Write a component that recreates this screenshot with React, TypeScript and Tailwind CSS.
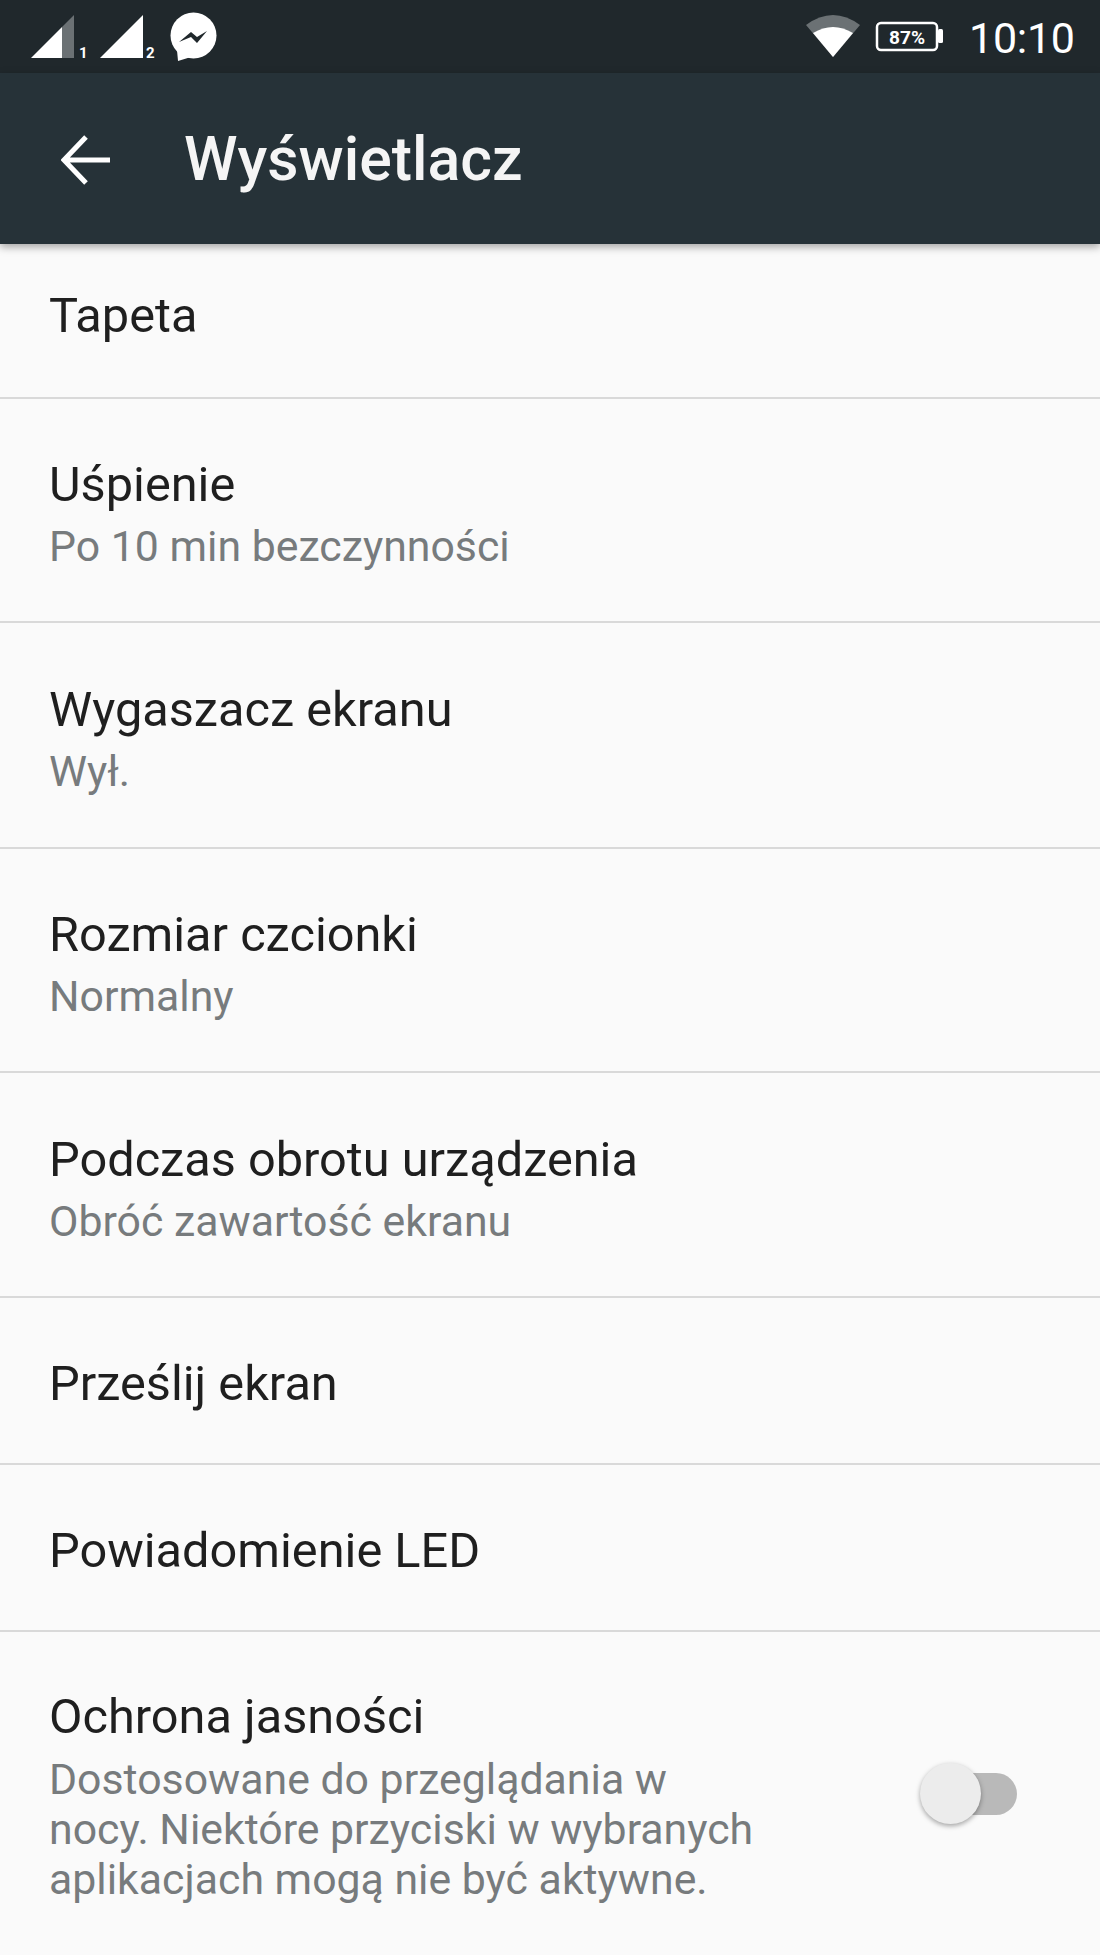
const font = { fontFamily: 'Roboto, sans-serif' };

function Title({ children }: { children: string }) {
  return <div className="text-[48.7px] leading-[56px] text-[#1f1f1f]">{children}</div>;
}

function Sub({ children }: { children: string }) {
  return <div className="text-[42.8px] leading-[50px] text-[#777b7d]">{children}</div>;
}

function Row({ title, sub, h, pad }: { title: string; sub?: string; h: string; pad: string }) {
  return (
    <div className={`${h} ${pad} flex flex-col justify-center border-b-2 border-[#d9d9d9] pl-[49px]`}>
      <Title>{title}</Title>
      {sub && <div className="mt-[8px]"><Sub>{sub}</Sub></div>}
    </div>
  );
}

export default function App() {
  return (
    <div className="w-[1100px] h-[1955px] overflow-hidden bg-[#fafafa] relative" style={font}>
      <div className="h-[73px] bg-[#20282c] flex items-start justify-between text-white">
        <svg width="240" height="73" viewBox="0 0 240 73">
          <polygon points="31,58 62,58 62,27" fill="#fff" />
          <polygon points="62,58 74,58 74,15 62,27" fill="#6b7174" />
          <text x="79" y="58" fontSize="15" fontWeight="700" fill="#fff">1</text>
          <polygon points="100,58 143,58 143,15" fill="#fff" />
          <text x="146" y="58" fontSize="15" fontWeight="700" fill="#fff">2</text>
          <circle cx="193.5" cy="35.5" r="23" fill="#fff" />
          <polygon points="177,50 178,61 191,57" fill="#fff" />
          <path d="M179 42 L191 32 L197 37 L207 31 L197 43 L191 37 Z" fill="#20282c" />
        </svg>
        <div className="flex items-start">
          <svg width="300" height="73" viewBox="800 0 300 73">
            <path d="M806 25 Q833 5 860 25 L833 57 Z" fill="#6b7174" />
            <path d="M813 33 Q833 21 853 33 L833 57 Z" fill="#fff" />
            <rect x="877" y="23" width="60" height="27" rx="4" fill="none" stroke="#fff" strokeWidth="2.5" />
            <rect x="938" y="29" width="5" height="14" rx="1.5" fill="#fff" />
            <text x="889" y="44" fontSize="19" fontWeight="700" fill="#fff" textLength="36" lengthAdjust="spacingAndGlyphs">87%</text>
            <text x="969" y="53" fontSize="43" fontWeight="400" fill="#fff" textLength="106" lengthAdjust="spacing">10:10</text>
          </svg>
        </div>
      </div>
      <div className="h-[171px] bg-[#263238] flex items-center shadow-[0_3px_8px_rgba(0,0,0,0.35)] relative text-white pl-[61px] pt-[3px]">
        <svg width="50" height="50" viewBox="0 0 50 50" fill="none" stroke="#fff" strokeWidth="5">
          <path d="M49 25 H3 M25 2 L3 25 L25 48" />
        </svg>
        <div className="ml-[73px] text-[60.8px] font-medium text-[#f5f5f5] leading-none">Wyświetlacz</div>
      </div>
      <Row h="h-[155px]" pad="pb-[10px]" title="Tapeta" />
      <Row h="h-[224px]" pad="pt-[7px]" title="Uśpienie" sub="Po 10 min bezczynności" />
      <Row h="h-[226px]" pad="pt-[7px]" title="Wygaszacz ekranu" sub="Wył." />
      <Row h="h-[224px]" pad="pt-[7px]" title="Rozmiar czcionki" sub="Normalny" />
      <Row h="h-[225px]" pad="pt-[8px]" title="Podczas obrotu urządzenia" sub="Obróć zawartość ekranu" />
      <Row h="h-[167px]" pad="pt-[6px]" title="Prześlij ekran" />
      <Row h="h-[167px]" pad="pt-[6px]" title="Powiadomienie LED" />
      <div className="flex items-center pl-[49px] pr-[83px] pt-[57px]">
        <div className="w-[720px]">
          <Title>Ochrona jasności</Title>
          <div className="mt-[9px]">
            <Sub>Dostosowane do przeglądania w nocy. Niektóre przyciski w wybranych aplikacjach mogą nie być aktywne.</Sub>
          </div>
        </div>
        <div className="relative w-[95px] h-[42px] rounded-full bg-[#b9b9b9] ml-auto mt-[-6px]">
          <div className="absolute left-[-2px] top-[-10px] w-[61px] h-[61px] rounded-full bg-[#ececec] shadow-[0_2px_5px_rgba(0,0,0,0.35)]"></div>
        </div>
      </div>
    </div>
  );
}
